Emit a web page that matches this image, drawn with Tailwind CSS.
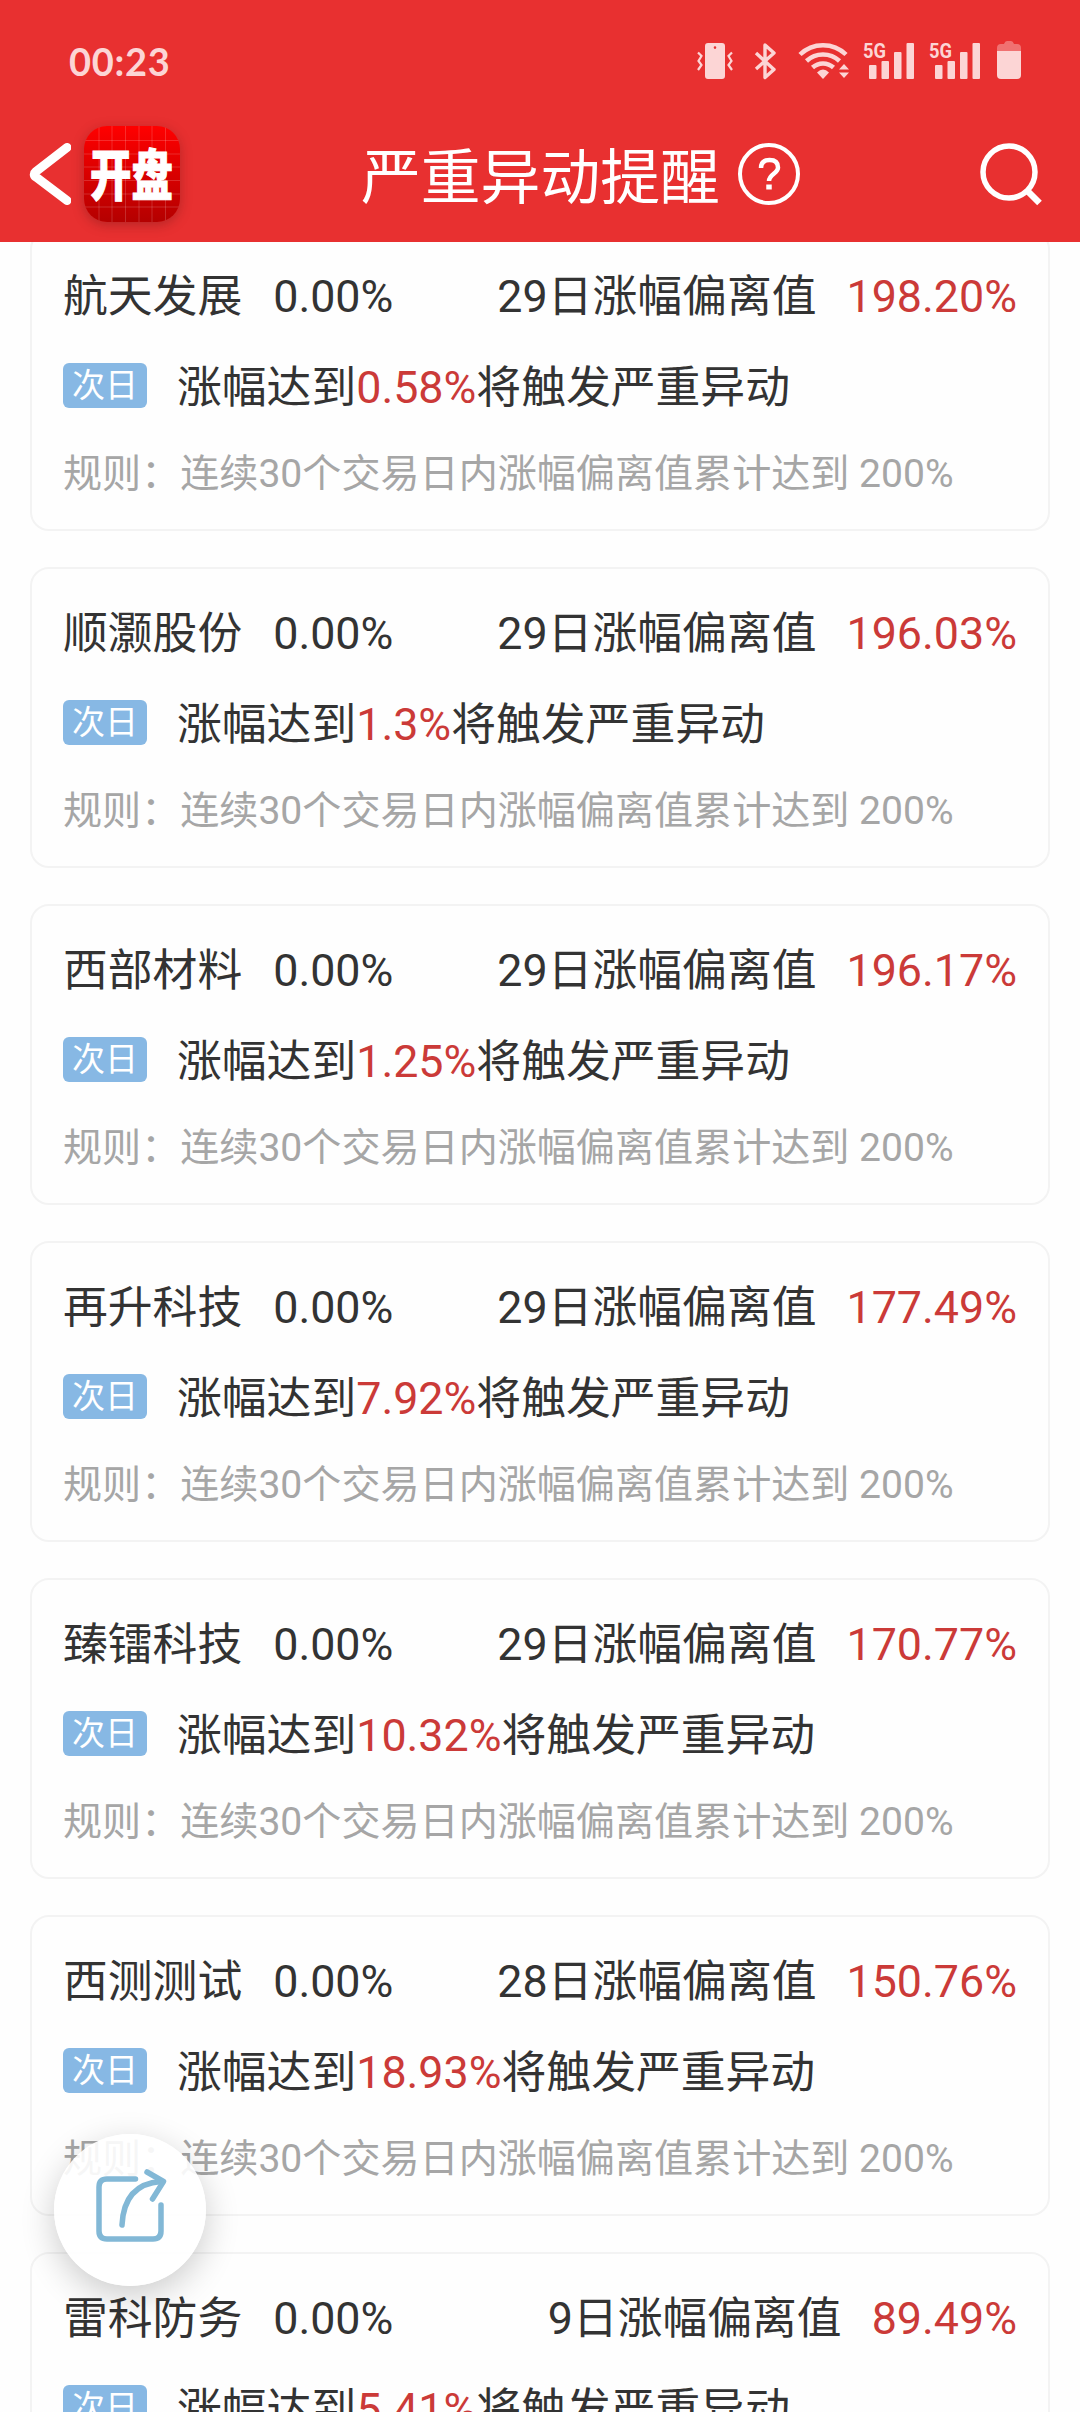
<!DOCTYPE html>
<html lang="zh-CN">
<head>
    <meta charset="UTF-8">
    <meta name="viewport" content="width=device-width, initial-scale=1.0">
    <title>严重异动提醒</title>
    <script src="https://cdn.jsdelivr.net/npm/@tailwindcss/browser@4"></script>
</head>
<body class="bg-[#fefefe] w-[1080px] h-[2412px] overflow-hidden relative text-[#333] font-['Roboto','Noto_Sans_CJK_SC',sans-serif]">

    <header class="relative z-10 h-[242px] bg-[#e83030] flex flex-col">
        <!-- status bar -->
        <div class="h-[112px] pt-[12px] pl-[69px] pr-[59px] flex items-center justify-between text-[#fcd5d5]">
            <span class="font-['Lato'] font-bold text-[38px] tracking-[0.7px] leading-none pb-[3px]">00:23</span>
            <svg class="w-[330px] h-[44px] -mt-[2px]" viewBox="691 40 330 44" fill="currentColor">
                <!-- vibrate -->
                <path fill-rule="evenodd" d="M708 44h14a3 3 0 0 1 3 3v30a3 3 0 0 1-3 3h-14a3 3 0 0 1-3-3v-30a3 3 0 0 1 3-3zM715 47.300a1.300 1.300 0 1 0 0 2.600a1.300 1.300 0 1 0 0-2.600z"/>
                <path d="M698 53.500l3.500 3.500-3 5 3 4-3.500 5M732 53.500l-3.500 3.500 3 5-3 4 3.500 5" fill="none" stroke="currentColor" stroke-width="2.200"/>
                <!-- bluetooth -->
                <path d="M756 54l18 16.500-9 8V46l9 8-18 16" fill="none" stroke="currentColor" stroke-width="3.400" stroke-linejoin="round"/>
                <!-- wifi -->
                <path d="M800 55.500a33 33 0 0 1 46 0M806.500 62a24 24 0 0 1 33 0M812.500 68.500a15.500 15.500 0 0 1 21 0" fill="none" stroke="currentColor" stroke-width="4.500"/>
                <path d="M823 80l-6-6.500q6-6 12 0z"/>
                <path d="M844 65l5 5.500h-10zM844 79l-5-5.500h10z"/>
                <!-- signal 1 -->
                <text x="863" y="58.500" font-family="Roboto" font-weight="700" font-size="20" textLength="23" lengthAdjust="spacingAndGlyphs">5G</text>
                <rect x="869" y="66" width="7.500" height="14" rx="1"/>
                <rect x="881.500" y="62" width="7.500" height="18" rx="1"/>
                <rect x="894" y="53" width="7.500" height="27" rx="1"/>
                <rect x="906.500" y="44" width="7.500" height="36" rx="1"/>
                <!-- signal 2 -->
                <text x="929" y="58.500" font-family="Roboto" font-weight="700" font-size="20" textLength="23" lengthAdjust="spacingAndGlyphs">5G</text>
                <rect x="935" y="66" width="7.500" height="14" rx="1"/>
                <rect x="947.500" y="62" width="7.500" height="18" rx="1"/>
                <rect x="960" y="53" width="7.500" height="27" rx="1"/>
                <rect x="972.500" y="44" width="7.500" height="36" rx="1"/>
                <!-- battery -->
                <path opacity=".4" d="M997 52v-3q0-4 4-4h3q1-3 3-3h4q2 0 3 3h3q4 0 4 4v3z"/>
                <path d="M997 52h24v24a4 4 0 0 1-4 4h-16a4 4 0 0 1-4-4z"/>
            </svg>
        </div>

        <!-- title bar -->
        <div class="h-[130px] grid grid-cols-[361px_1fr_100px] items-center">
            <div class="flex items-center pl-[27px] pb-[6px] gap-[13px]">
                <svg class="w-[44px] h-[66px]" viewBox="0 0 44 66" fill="none" stroke="white" stroke-width="9" stroke-linecap="round" stroke-linejoin="round">
                    <path d="M40 6.500L9 30.500Q5.500 33.500 9 36L40 59.500"/>
                </svg>
                <div class="w-[96px] h-[96px] rounded-[23px] overflow-hidden shadow-[0_3px_12px_rgba(90,20,20,0.35)]">
                    <svg class="w-full h-full" viewBox="0 0 96 96">
                        <defs>
                            <linearGradient id="logoBg" x1="0" y1="0" x2="0" y2="1">
                                <stop offset="0" stop-color="#ff0000"/>
                                <stop offset="1" stop-color="#b40000"/>
                            </linearGradient>
                        </defs>
                        <rect width="96" height="96" fill="url(#logoBg)"/>
                        <path d="M15 0v96M28 0v96M41.500 0v96M55 0v96M68 0v96M81.500 0v96M0 14.500h96M0 28h96M0 41h96M0 54.500h96M0 68h96M0 81h96" stroke="white" stroke-opacity=".17" stroke-width="1"/>
                        <text transform="translate(6 68.500) scale(.76 1)" font-family="Noto Sans CJK SC" font-weight="900" font-size="54.500" fill="white" stroke="white" stroke-width="1">开盘</text>
                    </svg>
                </div>
            </div>
            <div class="flex items-center gap-[17px]">
                <h1 class="text-white text-[59.8px] leading-[70px] pt-[4px]">严重异动提醒</h1>
                <svg class="w-[64px] h-[64px] -mt-[7px]" viewBox="0 0 64 64" fill="none" stroke="white">
                    <circle cx="32" cy="32" r="29" stroke-width="4"/>
                    <path d="M24 26q0-8 8.500-8t8.500 7.500c0 6-9 6.500-9 13.500" stroke-width="4.500"/>
                    <path d="M32 42.500v5" stroke-width="5.500"/>
                </svg>
            </div>
            <svg class="w-[64px] h-[64px] -mt-[7px] -ml-[2px]" viewBox="978 141 64 64" fill="none" stroke="white">
                <circle cx="1009" cy="171" r="26" stroke-width="5.500"/>
                <path d="M1027 189.500l12.500 12.500" stroke-width="6.500"/>
            </svg>
        </div>
    </header>

    <main id="list" class="-mt-[12px] pl-[30px] pr-[30px] flex flex-col gap-[36px]"></main>

    <!-- share button -->
    <button class="absolute z-20 left-[54px] top-[2134px] w-[152px] h-[152px] rounded-full bg-white/90 shadow-[0_10px_34px_rgba(0,0,0,0.2)] flex items-center justify-center">
        <svg class="w-[152px] h-[152px]" viewBox="54 2134 152 152" fill="none" stroke="#82b8d6" stroke-width="5.500" stroke-linecap="round" stroke-linejoin="round">
            <path d="M135.500 2179H107q-8 0-8 8v44q0 8 8 8h46q8 0 8-8v-26"/>
            <path d="M122 2225q2-41 39-43.500"/>
            <path d="M147 2172l16.500 9.500-11 17.500"/>
        </svg>
    </button>

    <script>
        const stocks = [
            { name: '航天发展', days: 29, value: '198.20%', trigger: '0.58%' },
            { name: '顺灏股份', days: 29, value: '196.03%', trigger: '1.3%' },
            { name: '西部材料', days: 29, value: '196.17%', trigger: '1.25%' },
            { name: '再升科技', days: 29, value: '177.49%', trigger: '7.92%' },
            { name: '臻镭科技', days: 29, value: '170.77%', trigger: '10.32%' },
            { name: '西测测试', days: 28, value: '150.76%', trigger: '18.93%' },
            { name: '雷科防务', days: 9, value: '89.49%', trigger: '5.41%' },
        ];

        document.getElementById('list').innerHTML = stocks.map(s => `
            <section class="h-[301px] shrink-0 border-2 border-[#f3f3f3] rounded-[19px] pt-[35px] px-[31px] flex flex-col gap-[28px] whitespace-nowrap">
                <div class="flex text-[44.8px] leading-[60px]">
                    <span>${s.name}</span>
                    <span class="ml-[31px]">0.00%</span>
                    <span class="ml-auto">${s.days}日涨幅偏离值</span>
                    <span class="ml-[30px] text-[#cb3a38]">${s.value}</span>
                </div>
                <div class="flex items-center text-[44.8px] leading-[60px]">
                    <span class="w-[84px] h-[45px] rounded-[6px] bg-[#87b8e4] text-white text-[33px] leading-[46px] text-center">次日</span>
                    <p class="ml-[30px] pt-[5px] -mb-[1px] leading-[56px]">涨幅达到<span class="text-[#cb3a38]">${s.trigger}</span>将触发严重异动</p>
                </div>
                <p class="text-[39.1px] leading-[62px] text-[#a6a6a6]">规则：连续30个交易日内涨幅偏离值累计达到 200%</p>
            </section>`).join('');
    </script>
</body>
</html>
